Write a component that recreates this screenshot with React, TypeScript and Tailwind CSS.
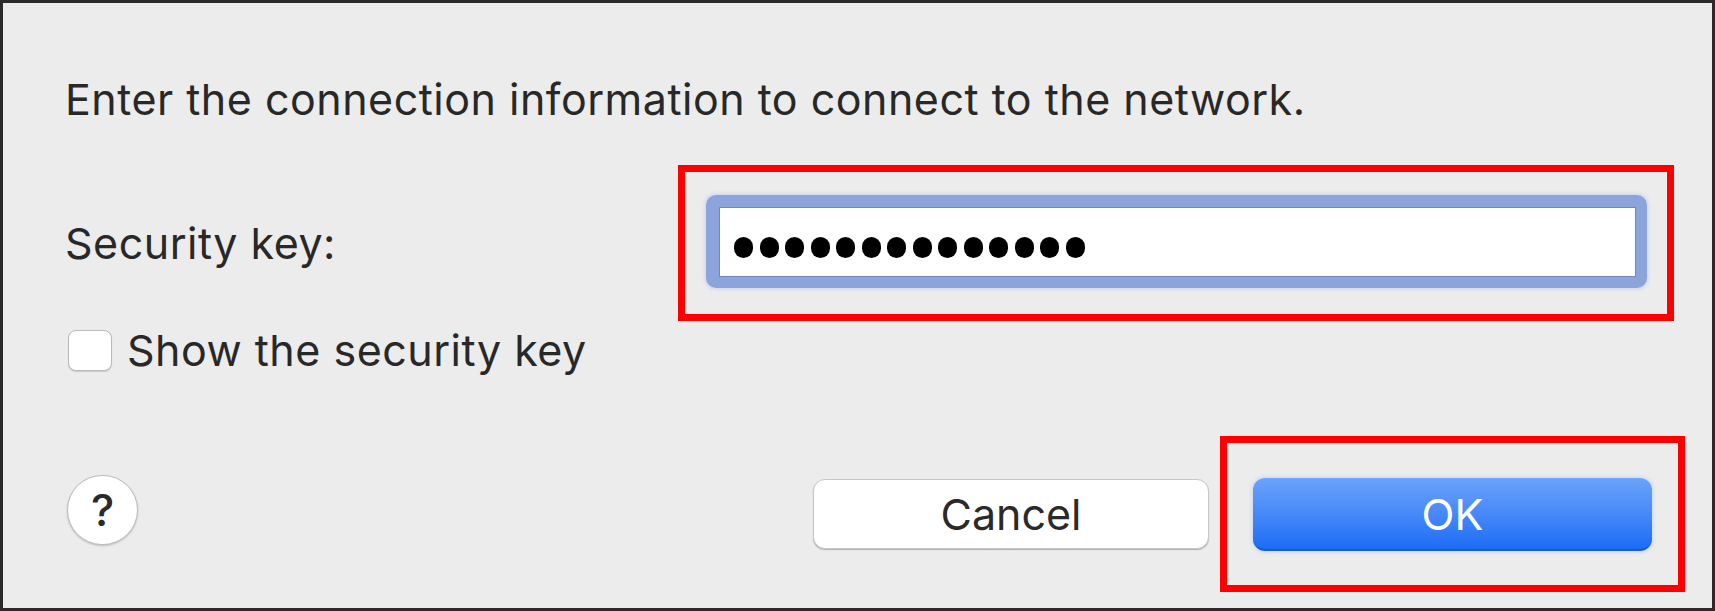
import React from 'react';

const PasswordDots = ({ count }: { count: number }) => (
    <div className="h-full bg-white border border-[#7488b5] flex items-center gap-[6.5px] pl-[14px] pt-[10px]">
        {Array.from({ length: count }).map((_, i) => (
            <span key={i} className="w-[19px] h-[21px] rounded-full bg-black" />
        ))}
    </div>
);

const App = () => {
    return (
        <div className="w-[1715px] h-[611px] border-[3px] border-[#2a2a2a] bg-[#ececec] flex flex-col font-[family-name:Inter,sans-serif] text-[#282828] tracking-[0.5px]">
            {/* Intro line */}
            <p className="mt-[70px] ml-[62px] text-[43px] leading-[52px]">
                Enter the connection information to connect to the network.
            </p>

            {/* Security key row */}
            <div className="mt-[40px] ml-[62px] flex items-center">
                <label className="w-[613px] text-[43px] leading-[52px]">Security key:</label>
                <div className="border-[7px] border-[#ff0000] pl-[21px] pr-[20px] pt-[23px] pb-[26px]">
                    <div className="w-[941px] h-[93px] rounded-[10px] bg-[#8ba4dc] pt-[12px] pl-[13px] pr-[11px] pb-[11px] shadow-[0_0_3px_2px_rgba(170,190,235,0.35)]">
                        <PasswordDots count={14} />
                    </div>
                </div>
            </div>

            {/* Show key checkbox */}
            <div className="mt-[3px] ml-[62px] flex items-start">
                <span className="ml-[3px] mt-[6px] w-[44px] h-[41px] rounded-[8px] bg-white border border-[#b9b9b9] shadow-[0_1px_1px_rgba(0,0,0,0.15)]" />
                <span className="ml-[15px] text-[43px] leading-[52px]">Show the security key</span>
            </div>

            {/* Buttons */}
            <div className="mt-[60px] ml-[64px] mr-[27px] flex items-center">
                <button className="mb-[8px] w-[71px] h-[70px] rounded-full bg-white border border-[#bcbcbc] shadow-[0_1px_2px_rgba(0,0,0,0.2)] flex items-center justify-center text-[44px] font-medium leading-none tracking-normal text-[#2a2a2a]">
                    ?
                </button>
                <div className="flex-1" />
                <button className="mr-[11px] w-[396px] h-[70px] rounded-[12px] bg-white border border-[#c6c6c6] shadow-[0_1px_1px_rgba(0,0,0,0.25)] text-[43px] leading-[52px] tracking-normal text-[#2a2a2a]">
                    Cancel
                </button>
                <div className="border-[7px] border-[#ff0000] pl-[26px] pr-[26px] pt-[35px] pb-[34px]">
                    <button className="w-[399px] h-[73px] rounded-[12px] bg-gradient-to-b from-[#6ca3fb] to-[#1a6cf5] border-b-2 border-[#1659d0] shadow-[0_0_3px_2px_rgba(190,210,245,0.5)] text-[43px] leading-[52px] tracking-normal text-white">
                        OK
                    </button>
                </div>
            </div>
        </div>
    );
};

export default App;
